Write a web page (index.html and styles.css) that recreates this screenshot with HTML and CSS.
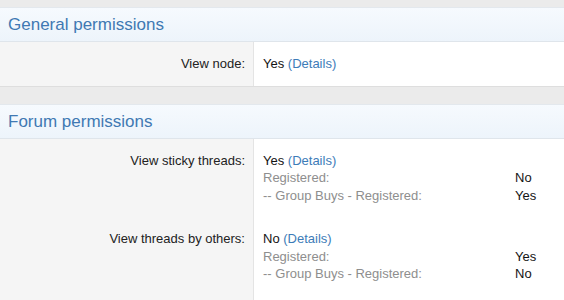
FILE: index.html
```html
<!DOCTYPE html>
<html lang="en">
<head>
<meta charset="utf-8">
<title>Permissions</title>
<link rel="stylesheet" href="styles.css">
</head>
<body>
<div class="page">
  <section class="block">
    <h2 class="block-title">General permissions</h2>
    <div class="perm-row">
      <div class="perm-label">View node:</div>
      <div class="perm-value">
        <div class="perm-main">Yes <a class="details" href="#">(Details)</a></div>
      </div>
    </div>
  </section>
  <section class="block">
    <h2 class="block-title">Forum permissions</h2>
    <div class="perm-row">
      <div class="perm-label">View sticky threads:</div>
      <div class="perm-value">
        <div class="perm-main">Yes <a class="details" href="#">(Details)</a></div>
        <div class="sub-list">
          <span class="sub-label">Registered:</span><span class="sub-value">No</span>
          <span class="sub-label">-- Group Buys - Registered:</span><span class="sub-value">Yes</span>
        </div>
      </div>
    </div>
    <div class="perm-row">
      <div class="perm-label">View threads by others:</div>
      <div class="perm-value">
        <div class="perm-main">No <a class="details" href="#">(Details)</a></div>
        <div class="sub-list">
          <span class="sub-label">Registered:</span><span class="sub-value">Yes</span>
          <span class="sub-label">-- Group Buys - Registered:</span><span class="sub-value">No</span>
        </div>
      </div>
    </div>
  </section>
</div>
</body>
</html>
```

FILE: styles.css
```css
html, body {
  margin: 0;
  padding: 0;
}
body {
  background: #ebebeb;
  font-family: "Liberation Sans", Arial, Helvetica, sans-serif;
  font-size: 13px;
  color: #1d1d1d;
}
.page {
  display: flex;
  flex-direction: column;
  gap: 17px;
  padding-top: 7px;
}
.block {
  background: #fff;
  border-bottom: 1px solid #dedede;
}
.block-title {
  margin: 0;
  padding: 0 8px;
  height: 33px;
  line-height: 33px;
  font-size: 17px;
  font-weight: normal;
  color: #4079b3;
  background: linear-gradient(to bottom, #f6fafe, #edf4fb);
  border-top: 1px solid #e3e8ed;
  border-bottom: 1px solid #dfe5eb;
}
.perm-row {
  display: grid;
  grid-template-columns: 254px 1fr;
  line-height: 17.5px;
}
.perm-label {
  background: #f5f5f5;
  border-right: 1px solid #e4e4e4;
  text-align: right;
  padding: 13px 8px 13px 0;
  color: #222;
}
.perm-value {
  padding: 13px 0 13px 9px;
  color: #141414;
}
.block:last-child .perm-row:last-child .perm-label,
.block:last-child .perm-row:last-child .perm-value {
  padding-bottom: 30px;
}
.details {
  color: #3d7cb8;
  text-decoration: none;
}
.sub-list {
  display: grid;
  grid-template-columns: 1fr 49px;
}
.sub-label {
  color: #8e8e8e;
}
.sub-value {
  color: #141414;
}
```
